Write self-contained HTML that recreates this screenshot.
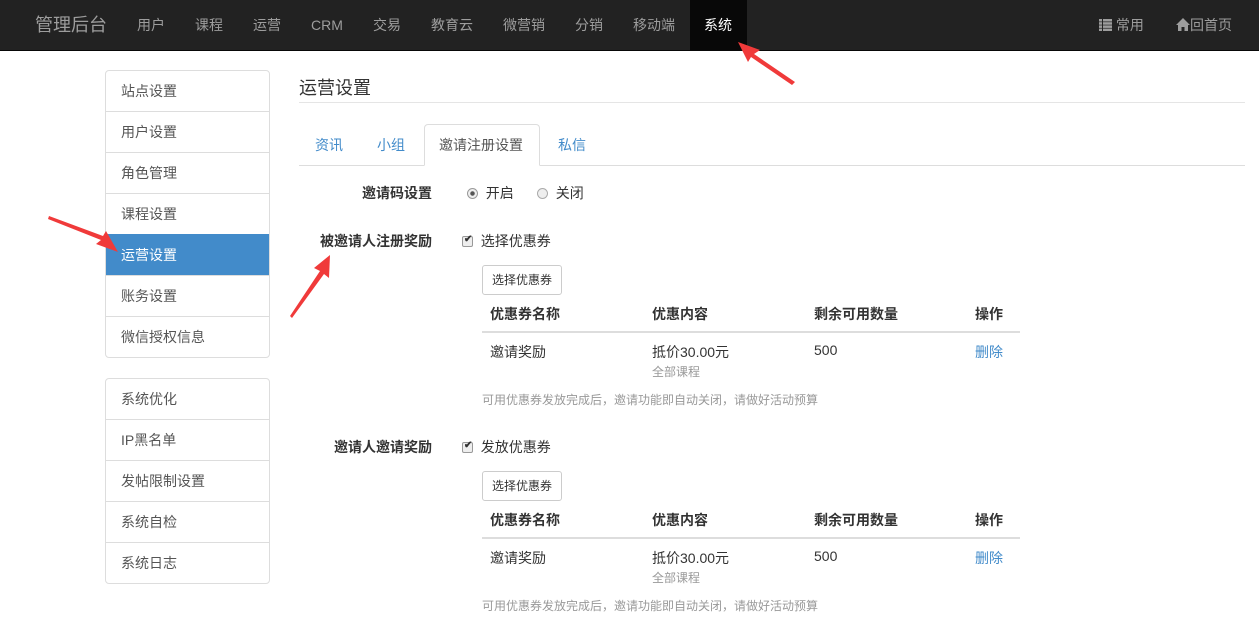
<!DOCTYPE html>
<html><head><meta charset="utf-8"><style>
*{box-sizing:border-box;margin:0;padding:0}
body{width:1259px;height:632px;overflow:hidden;background:#fff;font-family:"Liberation Sans","Noto Sans CJK SC",sans-serif;font-size:14px;color:#333;position:relative}
.nav{position:absolute;left:0;top:0;width:1259px;height:51px;background:#222;border-bottom:1px solid #080808}
.nav span{position:absolute;top:0;line-height:50px;color:#9d9d9d;font-size:14px}
.nav .brand{font-size:18px;left:35px}
.nav .act{background:#080808;color:#fff;padding:0 14px;left:690px;width:57px}
.side{position:absolute;left:105px;width:165px;border:1px solid #ddd;border-radius:4px;overflow:hidden}
.side div{height:41px;line-height:40px;padding-left:15px;border-top:1px solid #ddd;color:#555}
.side div:first-child{border-top:none;height:40px}
.side .on{background:#428bca;color:#fff;border-color:#428bca}
.a{position:absolute;white-space:nowrap}
.lbl{font-weight:bold;text-align:right;width:200px}
.gray{color:#999;font-size:12px}
.btn{border:1px solid #ccc;border-radius:3px;padding:0 9px;height:30px;line-height:28px;font-size:12px;background:#fff}
.hl{position:absolute;height:2px;background:#ddd}
.blue{color:#428bca}
.cb{display:inline-block;width:11px;height:11px;border:1px solid #999;border-radius:2px;background:#eee;vertical-align:-1px;position:relative}
</style></head><body>
<div class="nav">
<span class="brand">管理后台</span>
<span style="left:137px">用户</span><span style="left:195px">课程</span><span style="left:253px">运营</span><span style="left:311px">CRM</span><span style="left:373px">交易</span><span style="left:431px">教育云</span><span style="left:503px">微营销</span><span style="left:575px">分销</span><span style="left:633px">移动端</span>
<span class="act">系统</span>
<span style="left:1099px"><svg width="13" height="12" style="vertical-align:-1px" fill="#9d9d9d"><rect x="0" y="0" width="3" height="2.5"/><rect x="4" y="0" width="9" height="2.5"/><rect x="0" y="3.2" width="3" height="2.5"/><rect x="4" y="3.2" width="9" height="2.5"/><rect x="0" y="6.4" width="3" height="2.5"/><rect x="4" y="6.4" width="9" height="2.5"/><rect x="0" y="9.6" width="3" height="2.4"/><rect x="4" y="9.6" width="9" height="2.4"/></svg> 常用</span>
<span style="left:1176px"><svg width="14" height="13" style="vertical-align:-1px" fill="#9d9d9d"><path d="M7 0 L14 7 L12 7 L12 13 L8.5 13 L8.5 9 L5.5 9 L5.5 13 L2 13 L2 7 L0 7 Z"/></svg>回首页</span>
</div>
<div class="side" style="top:70px">
<div>站点设置</div><div>用户设置</div><div>角色管理</div><div>课程设置</div><div class="on">运营设置</div><div>账务设置</div><div>微信授权信息</div>
</div>
<div class="side" style="top:378px">
<div>系统优化</div><div>IP黑名单</div><div>发帖限制设置</div><div>系统自检</div><div>系统日志</div>
</div>
<div class="a" style="left:299px;top:74px;font-size:18px">运营设置</div>
<div style="position:absolute;left:299px;top:102px;width:946px;height:1px;background:#e5e5e5"></div>
<div style="position:absolute;left:299px;top:165px;width:946px;height:1px;background:#ddd"></div>
<div class="a blue" style="left:315px;top:135px">资讯</div>
<div class="a blue" style="left:377px;top:135px">小组</div>
<div style="position:absolute;left:424px;top:124px;width:116px;height:42px;border:1px solid #ddd;border-bottom-color:#fff;border-radius:4px 4px 0 0;background:#fff"></div>
<div class="a" style="left:439px;top:135px;color:#555">邀请注册设置</div>
<div class="a blue" style="left:558px;top:135px">私信</div>

<div class="a lbl" style="left:232px;top:183px">邀请码设置</div>
<div class="a" style="left:467px;top:183px"><span style="display:inline-block;width:11px;height:11px;border:1px solid #999;border-radius:50%;background:radial-gradient(#555 30%,#eee 40%);vertical-align:-1px"></span>&nbsp; 开启</div>
<div class="a" style="left:537px;top:183px"><span style="display:inline-block;width:11px;height:11px;border:1px solid #aaa;border-radius:50%;background:#eee;vertical-align:-1px"></span>&nbsp; 关闭</div>

<div class="a lbl" style="left:232px;top:231px">被邀请人注册奖励</div>
<div class="a" style="left:462px;top:231px"><span class="cb"><b style="position:absolute;left:1px;top:-3px;font-size:10px">✔</b></span>&nbsp; 选择优惠券</div>
<div class="a btn" style="left:482px;top:265px">选择优惠券</div>
<div class="a" style="left:490px;top:304px;font-weight:bold">优惠券名称</div><div class="a" style="left:652px;top:304px;font-weight:bold">优惠内容</div><div class="a" style="left:814px;top:304px;font-weight:bold">剩余可用数量</div><div class="a" style="left:975px;top:304px;font-weight:bold">操作</div>
<div class="hl" style="left:482px;top:331px;width:538px"></div>
<div class="a" style="left:490px;top:342px">邀请奖励</div><div class="a" style="left:652px;top:342px">抵价30.00元</div><div class="a gray" style="left:652px;top:363px">全部课程</div><div class="a" style="left:814px;top:342px">500</div><div class="a blue" style="left:975px;top:342px">删除</div>
<div class="a gray" style="left:482px;top:391px">可用优惠券发放完成后，邀请功能即自动关闭，请做好活动预算</div>

<div class="a lbl" style="left:232px;top:437px">邀请人邀请奖励</div>
<div class="a" style="left:462px;top:437px"><span class="cb"><b style="position:absolute;left:1px;top:-3px;font-size:10px">✔</b></span>&nbsp; 发放优惠券</div>
<div class="a btn" style="left:482px;top:471px">选择优惠券</div>
<div class="a" style="left:490px;top:510px;font-weight:bold">优惠券名称</div><div class="a" style="left:652px;top:510px;font-weight:bold">优惠内容</div><div class="a" style="left:814px;top:510px;font-weight:bold">剩余可用数量</div><div class="a" style="left:975px;top:510px;font-weight:bold">操作</div>
<div class="hl" style="left:482px;top:537px;width:538px"></div>
<div class="a" style="left:490px;top:548px">邀请奖励</div><div class="a" style="left:652px;top:548px">抵价30.00元</div><div class="a gray" style="left:652px;top:569px">全部课程</div><div class="a" style="left:814px;top:548px">500</div><div class="a blue" style="left:975px;top:548px">删除</div>
<div class="a gray" style="left:482px;top:597px">可用优惠券发放完成后，邀请功能即自动关闭，请做好活动预算</div>

<svg style="position:absolute;left:0;top:0" width="1259" height="632">
<g fill="#f03a3a">
<polygon points="738,42 760,50 754,54 795,82 792,85 751,57 748,62"/>
<polygon points="118,252 96,244 101,240 48,219 49,216 103,236 106,231"/>
<polygon points="330,255 329,278 324,274 292,318 290,316 320,271 314,268"/>
</g>
</svg>
</body></html>
